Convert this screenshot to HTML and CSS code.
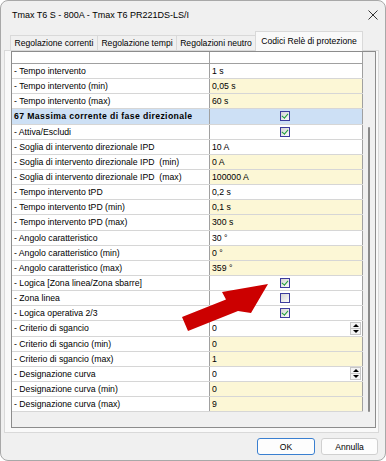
FILE: index.html
```html
<!DOCTYPE html>
<html lang="it">
<head>
    <meta charset="UTF-8">
    <title>Tmax T6 S - 800A - Tmax T6 PR221DS-LS/I</title>
    <link rel="stylesheet" href="styles.css">
</head>
<body>
<div class="window">
    <div class="titlebar">
        <span class="title">Tmax T6 S - 800A - Tmax T6 PR221DS-LS/I</span>
        <svg class="close" width="10" height="10" viewBox="0 0 10 10"><path d="M0.5 0.5 L9.5 9.5 M9.5 0.5 L0.5 9.5" stroke="#333" stroke-width="1"/></svg>
    </div>

    <div class="tabs">
        <div class="tab t1">Regolazione correnti</div>
        <div class="tab t2">Regolazione tempi</div>
        <div class="tab t3">Regolazioni neutro</div>
        <div class="tab t4 active">Codici Relè di protezione</div>
    </div>

    <div class="panel">
        <div class="grid">
            <div class="table">
                <div class="row head"><div class="c1"></div><div class="c2"></div></div>
                <div class="row"><div class="c1">- Tempo intervento</div><div class="c2">1 s</div></div>
                <div class="row"><div class="c1">- Tempo intervento (min)</div><div class="c2 ro">0,05 s</div></div>
                <div class="row"><div class="c1">- Tempo intervento (max)</div><div class="c2 ro">60 s</div></div>
                <div class="row group"><div class="c1">67 Massima corrente di fase direzionale</div><div class="c2 center"><span class="check on"></span></div></div>
                <div class="row"><div class="c1">- Attiva/Escludi</div><div class="c2 center"><span class="check on"></span></div></div>
                <div class="row"><div class="c1">- Soglia di intervento direzionale IPD</div><div class="c2">10 A</div></div>
                <div class="row"><div class="c1">- Soglia di intervento direzionale IPD&nbsp; (min)</div><div class="c2 ro">0 A</div></div>
                <div class="row"><div class="c1">- Soglia di intervento direzionale IPD&nbsp; (max)</div><div class="c2 ro">100000 A</div></div>
                <div class="row"><div class="c1">- Tempo intervento tPD</div><div class="c2">0,2 s</div></div>
                <div class="row"><div class="c1">- Tempo intervento tPD (min)</div><div class="c2 ro">0,1 s</div></div>
                <div class="row"><div class="c1">- Tempo intervento tPD (max)</div><div class="c2 ro">300 s</div></div>
                <div class="row"><div class="c1">- Angolo caratteristico</div><div class="c2">30 °</div></div>
                <div class="row"><div class="c1">- Angolo caratteristico (min)</div><div class="c2 ro">0 °</div></div>
                <div class="row"><div class="c1">- Angolo caratteristico (max)</div><div class="c2 ro">359 °</div></div>
                <div class="row"><div class="c1">- Logica [Zona linea/Zona sbarre]</div><div class="c2 center"><span class="check on"></span></div></div>
                <div class="row"><div class="c1">- Zona linea</div><div class="c2 center"><span class="check"></span></div></div>
                <div class="row"><div class="c1">- Logica operativa 2/3</div><div class="c2 center"><span class="check on"></span></div></div>
                <div class="row"><div class="c1">- Criterio di sgancio</div><div class="c2"><span>0</span><span class="spin"><i class="up"></i><i class="down"></i></span></div></div>
                <div class="row"><div class="c1">- Criterio di sgancio (min)</div><div class="c2 ro">0</div></div>
                <div class="row"><div class="c1">- Criterio di sgancio (max)</div><div class="c2 ro">1</div></div>
                <div class="row"><div class="c1">- Designazione curva</div><div class="c2"><span>0</span><span class="spin"><i class="up"></i><i class="down"></i></span></div></div>
                <div class="row"><div class="c1">- Designazione curva (min)</div><div class="c2 ro">0</div></div>
                <div class="row"><div class="c1">- Designazione curva (max)</div><div class="c2 ro">9</div></div>
                <div class="filler"></div>
            </div>
            <div class="vscroll"><div class="thumb"></div></div>
        </div>
    </div>

    <div class="buttons">
        <button class="btn ok">OK</button>
        <button class="btn cancel">Annulla</button>
    </div>

    <!-- red pointer over the grid -->
    <svg class="arrow" width="386" height="461" viewBox="0 0 386 461">
        <polygon points="268,284 222,292 226,299.5 182,317 188,331 238,311 251,313" fill="#cc0000"/>
    </svg>
</div>
</body>
</html>
```

FILE: styles.css
```css
body {
    margin: 0;
    background: #ffffff;
    font-family: "Liberation Sans", Arial, sans-serif;
    color: #000;
}

.window {
    position: relative;
    width: 386px;
    height: 461px;
    box-sizing: border-box;
    border: 1px solid #a8a8a8;
    border-radius: 8px;
    background: #f0f0f0;
    overflow: hidden;
}

/* title bar */
.titlebar {
    height: 27px;
    display: flex;
    align-items: center;
    justify-content: space-between;
    padding: 0 7px 0 11px;
    font-size: 9px;
}

.close {
    display: block;
}

/* tab strip */
.tabs {
    height: 22px;
    display: flex;
    align-items: flex-end;
    padding-left: 9px;
    box-sizing: border-box;
    font-size: 8.6px;
}

.tab {
    height: 15px;
    box-sizing: border-box;
    border: 1px solid #d9d9d9;
    border-bottom: none;
    background: #f0f0f0;
    display: flex;
    align-items: center;
    justify-content: center;
    margin-left: -1px;
}

.tab.t1 { width: 88px; margin-left: 0; }
.tab.t2 { width: 80px; }
.tab.t3 { width: 80px; }
.tab.t4 { width: 108px; }

.tab.active {
    height: 20px;
    margin-bottom: -1px;
    background: #f9f9f9;
    position: relative;
    z-index: 1;
    padding-bottom: 2px;
}

/* tab page */
.panel {
    margin: 0 6px 0 3px;
    border: 1px solid #d9d9d9;
    background: #f9f9f9;
    padding: 0 0 4px 6px;
}

.grid {
    width: 365px;
    height: 377px;
    box-sizing: border-box;
    border: 1px solid #8c8c8c;
    display: flex;
    background: #f0f0f0;
}

.table {
    width: 351px;
    display: flex;
    flex-direction: column;
    font-size: 8.7px;
}

.row {
    height: 15.15px;
    box-sizing: border-box;
    border-bottom: 1px solid #d6d6d6;
    display: flex;
    flex-shrink: 0;
    background: #ffffff;
}

.row.head {
    height: 12px;
    border-bottom-color: #a0a0a0;
}

.c1, .c2 {
    display: flex;
    align-items: center;
    white-space: nowrap;
    overflow: hidden;
    box-sizing: border-box;
    border-right: 1px solid #a0a0a0;
}

.c1 {
    width: 198px;
    padding-left: 2px;
}

.c2 {
    width: 153px;
    padding-left: 2px;
    justify-content: space-between;
}

.c2.ro {
    background: #fcf7d6;
}

.c2.center {
    justify-content: flex-start;
    padding-left: 70px;
}

.row.group {
    background: #cde0f5;
    font-weight: bold;
    letter-spacing: 0.38px;
}

.filler {
    flex: 1;
    background: #f0f0f0;
}

/* checkbox cells */
.check {
    width: 10px;
    height: 10px;
    box-sizing: border-box;
    border: 1px solid #3b3b9c;
    background: linear-gradient(135deg, #d4d4d4, #fbfbfb);
    position: relative;
}

.check.on::after {
    content: "";
    position: absolute;
    left: 2px;
    top: 0px;
    width: 2.5px;
    height: 5px;
    border-right: 1.6px solid #1e9e3a;
    border-bottom: 1.6px solid #1e9e3a;
    transform: rotate(40deg);
}

/* numeric up/down */
.spin {
    width: 11px;
    height: 13px;
    display: flex;
    flex-direction: column;
    margin-right: 1px;
}

.spin i {
    flex: 1;
    border: 1px solid #c8c8c8;
    background: #f4f4f4;
    position: relative;
}

.spin i.down {
    border-top: none;
}

.spin i.up::after,
.spin i.down::after {
    content: "";
    position: absolute;
    left: 1.5px;
    border-left: 3px solid transparent;
    border-right: 3px solid transparent;
}

.spin i.up::after {
    top: 1px;
    border-bottom: 3px solid #000;
}

.spin i.down::after {
    top: 1px;
    border-top: 3px solid #000;
}

/* thin scrollbar */
.vscroll {
    flex: 1;
    background: #f0f0f0;
}

.thumb {
    width: 2px;
    height: 285px;
    margin: 75px 0 0 5px;
    border-radius: 1px;
    background: #8a8a8a;
}

/* dialog buttons */
.buttons {
    display: flex;
    justify-content: flex-end;
    gap: 6px;
    padding: 5px 7px 0 0;
}

.btn {
    height: 17px;
    padding: 0;
    font-family: "Liberation Sans", Arial, sans-serif;
    font-size: 8.6px;
    color: #000;
    background: #fdfdfd;
    border: 1px solid #d0d0d0;
    border-radius: 3px;
}

.btn.ok {
    width: 58px;
    border-color: #3a7fd0;
}

.btn.cancel {
    width: 57px;
}

.arrow {
    position: absolute;
    left: -1px;
    top: -1px;
    pointer-events: none;
}
```
